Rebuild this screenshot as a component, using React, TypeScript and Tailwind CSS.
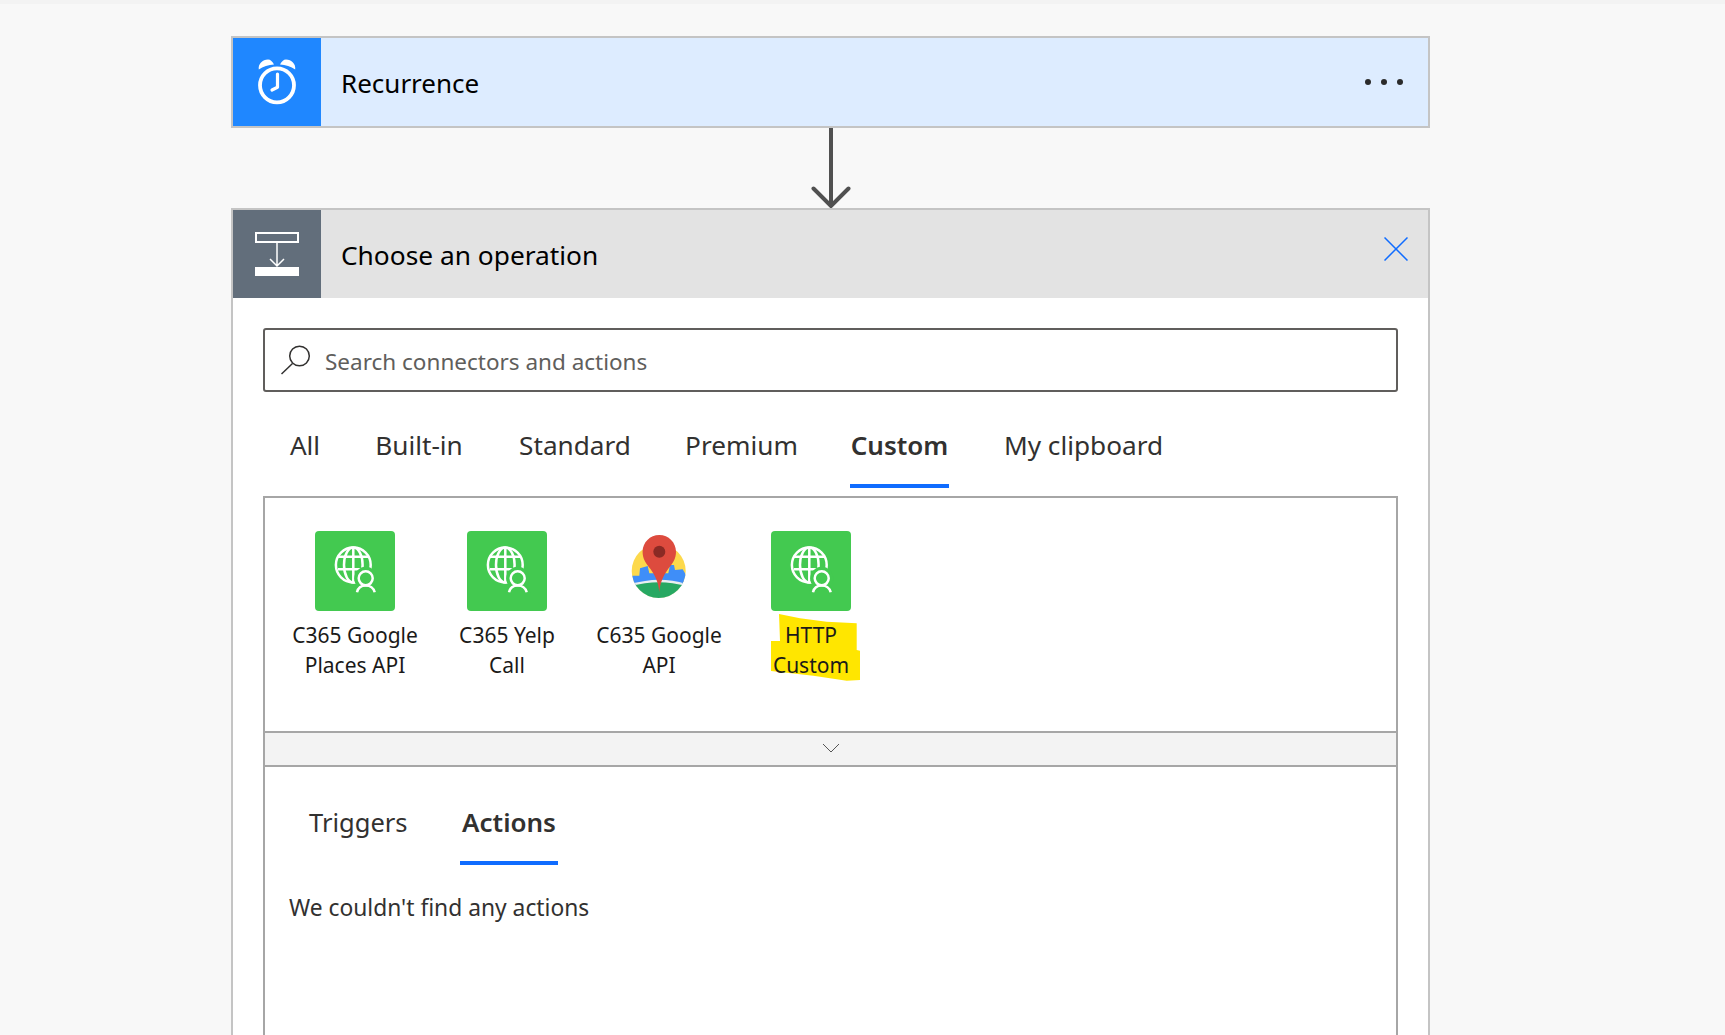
import React from "react";

function GlobeUser() {
  return (
    <svg width="80" height="80" viewBox="0 0 80 80" fill="none" stroke="#fff" strokeWidth="2.500">
      <circle cx="38.300" cy="34" r="17.400" />
      <ellipse cx="38.300" cy="34" rx="9.300" ry="17.400" />
      <path d="M38.300 16.600V51.400M23 25.700H53.600M23 38.300H53.600" />
      <circle cx="50.700" cy="47.300" r="11.500" fill="#43c950" stroke="none" />
      <path d="M38 63C39 56 45 52 50.700 52S62.500 56 63.500 63Z" fill="#43c950" stroke="none" />
      <circle cx="50.700" cy="47.300" r="7" />
      <path d="M42 61.300C43 57 46.500 54.600 50.700 54.600S58.700 57 59.700 61.300" />
    </svg>
  );
}

function Tile() {
  return (
    <div className="w-[80px] h-[80px] rounded-[4px] bg-[#43c950]">
      <GlobeUser />
    </div>
  );
}

function MapPin() {
  return (
    <svg width="80" height="80" viewBox="0 0 80 80">
      <defs>
        <clipPath id="disc">
          <circle cx="39.700" cy="40" r="27" />
        </clipPath>
      </defs>
      <g clipPath="url(#disc)">
        <rect x="10" y="10" width="60" height="60" fill="#fdd94c" />
        <path d="M13.300 44.700L20.300 44.700L21 37.300L28.700 35L30.300 42.300L49.300 42.300L51 34L55 34L56 39L63.700 38.300L68 45.700L68 56L13 56Z" fill="#3f8ef8" />
        <path d="M10 54Q40 43.600 70 54V70H10Z" fill="#e9eef0" />
        <path d="M10 56Q40 46.400 70 56V70H10Z" fill="#27a862" />
      </g>
      <path d="M40.300 61C39.500 52 36.500 45 31.500 38C27 32.500 23.600 28 23.600 20.700C23.600 11.500 31 4 40.300 4S57 11.500 57 20.700C57 28 53.600 32.500 49.100 38C44.100 45 41.100 52 40.300 61Z" fill="#dd4b3e" />
      <circle cx="40.300" cy="20.700" r="6" fill="#8a2a24" />
    </svg>
  );
}

function Item({ line1, line2, children, highlight }: { line1: string; line2: string; children: React.ReactNode; highlight?: boolean }) {
  return (
    <div className="relative w-[152px] flex flex-col items-center">
      {highlight && (
        <svg className="absolute left-0 top-0" width="152" height="152" viewBox="0 0 152 152">
          <polygon
            fill="#ffe600"
            points="44,83 65,87.300 91.700,90.700 121.700,92.300 121.700,119 125,119.700 125,149 111.700,149.700 78.300,144.700 36,140 36,110 45,110"
          />
        </svg>
      )}
      <div className="relative">{children}</div>
      <div className="relative mt-[9px] text-center text-[21px] leading-[30px] text-[#1b1a19] whitespace-nowrap">
        <div>{line1}</div>
        <div>{line2}</div>
      </div>
    </div>
  );
}

export default function App() {
  return (
    <div className="h-[1035px] overflow-hidden bg-[#f8f8f8] font-['Noto_Sans',sans-serif]">
      <div className="h-[4px] bg-[#f3f3f3]" />
      <div className="ml-[231px] w-[1199px] h-full pt-[32px] flex flex-col">
        <div className="h-[92px] shrink-0 border-2 border-[#c4c4c4] bg-[#ddecff] flex items-stretch">
          <div className="w-[88px] bg-[#1f87ff] flex items-center justify-center">
            <svg width="44" height="48" viewBox="0 0 44 48" fill="none" stroke="#fff">
              <circle cx="22" cy="27.300" r="17" strokeWidth="3.800" />
              <path d="M22.500 16V29.300L17 32" strokeWidth="3.200" strokeLinecap="round" strokeLinejoin="round" />
              <path d="M3.800 11.500C3 6 7.500 1.500 13 1.500C15.500 1.500 17.500 3.500 19 6.500C13.500 7 8 8.500 3.800 11.500Z" fill="#fff" stroke="none" />
              <path d="M40.200 11.500C41 6 36.500 1.500 31 1.500C28.500 1.500 26.500 3.500 25 6.500C30.500 7 36 8.500 40.200 11.500Z" fill="#fff" stroke="none" />
            </svg>
          </div>
          <div className="pl-[20px] pt-[2px] flex-1 flex items-center text-[26px] text-black">Recurrence</div>
          <div className="flex items-center gap-[10px] pr-[25px]">
            <span className="w-[6px] h-[6px] rounded-full bg-[#2b2b2b]" />
            <span className="w-[6px] h-[6px] rounded-full bg-[#2b2b2b]" />
            <span className="w-[6px] h-[6px] rounded-full bg-[#2b2b2b]" />
          </div>
        </div>

        <div className="h-[80px] shrink-0 flex justify-center">
          <svg width="44" height="80" viewBox="0 0 44 80" fill="none" stroke="#505050" strokeWidth="4">
            <path d="M22 0V77" />
            <path d="M4.500 60.500L22 78L39.500 60.500" strokeLinecap="round" />
          </svg>
        </div>

        <div className="flex-1 min-h-0 border-x-2 border-t-2 border-[#c4c4c4] bg-white flex flex-col">
          <div className="h-[88px] shrink-0 bg-[#e3e3e3] flex items-stretch">
            <div className="w-[88px] bg-[#626e7b] flex items-center justify-center">
              <svg width="44" height="44" viewBox="0 0 44 44" fill="none" stroke="#fff">
                <rect x="1" y="1" width="42" height="9" strokeWidth="2" />
                <path d="M22 11V34M15 27L22 34L29 27" strokeWidth="1.500" />
                <rect x="0" y="35" width="44" height="9" fill="#fff" stroke="none" />
              </svg>
            </div>
            <div className="pl-[20px] pt-[4px] flex-1 flex items-center text-[26.300px] text-black">Choose an operation</div>
            <div className="pr-[20px] pt-[27px]">
              <svg width="24" height="24" viewBox="0 0 24 24" stroke="#0f6cff" strokeWidth="1.500">
                <path d="M0.500 0.500L23.500 23.500M23.500 0.500L0.500 23.500" />
              </svg>
            </div>
          </div>

          <div className="flex-1 min-h-0 flex flex-col px-[30px] pt-[30px]">
            <div className="h-[64px] shrink-0 border-2 border-[#605e5c] rounded-[3px] flex items-center pl-[15px]">
              <svg width="32" height="32" viewBox="0 0 32 32" fill="none" stroke="#323130" strokeWidth="1.500">
                <circle cx="19.500" cy="12" r="9.800" />
                <path d="M12.500 19.500L1.500 30" />
              </svg>
              <span className="ml-[13px] pt-[3px] text-[22.500px] text-[#605e5c]">Search connectors and actions</span>
            </div>

            <div className="h-[96px] shrink-0 flex gap-[52px] pl-[25px] text-[26.200px] text-[#323130]">
              <div className="w-[34px] pt-[34px] text-center whitespace-nowrap">All</div>
              <div className="w-[90px] mr-[2px] pt-[34px] text-center whitespace-nowrap">Built-in</div>
              <div className="w-[114px] mr-[1px] pt-[34px] text-center whitespace-nowrap">Standard</div>
              <div className="w-[113px] pt-[34px] text-center whitespace-nowrap">Premium</div>
              <div className="w-[99px] h-[96px] pt-[34px] text-center whitespace-nowrap font-semibold text-[26px] relative">
                Custom
                <div className="absolute left-0 right-0 top-[92px] h-[4px] bg-[#0f6cff]" />
              </div>
              <div className="w-[165px] pt-[34px] text-center whitespace-nowrap">My clipboard</div>
            </div>

            <div className="mt-[8px] flex-1 min-h-0 border-2 border-[#a6a6a6] border-b-0 flex flex-col">
              <div className="h-[233px] shrink-0 flex pl-[14px] pt-[33px]">
                <Item line1="C365 Google" line2="Places API"><Tile /></Item>
                <Item line1="C365 Yelp" line2="Call"><Tile /></Item>
                <Item line1="C635 Google" line2="API"><MapPin /></Item>
                <Item line1="HTTP" line2="Custom" highlight><Tile /></Item>
              </div>
              <div className="h-[36px] shrink-0 border-y-2 border-[#a6a6a6] bg-[#f3f3f3] flex items-center justify-center">
                <svg className="ml-[1px] mt-[-3px]" width="18" height="10" viewBox="0 0 18 10" fill="none" stroke="#555" strokeWidth="1">
                  <path d="M1 1L9 9L17 1" />
                </svg>
              </div>
              <div className="h-[98px] shrink-0 flex pl-[44px] gap-[53px] text-[25.500px] text-[#323130]">
                <div className="w-[98px] pt-[36px] text-center whitespace-nowrap">Triggers</div>
                <div className="w-[98px] h-[98px] pt-[36px] text-center whitespace-nowrap font-semibold text-[26px] relative">
                  Actions
                  <div className="absolute left-0 right-0 top-[94px] h-[4px] bg-[#0f6cff]" />
                </div>
              </div>
              <div className="pl-[24px] pt-[25px] text-[22.800px] leading-[36px] text-[#323130]">We couldn&apos;t find any actions</div>
            </div>
          </div>
        </div>
      </div>
    </div>
  );
}
